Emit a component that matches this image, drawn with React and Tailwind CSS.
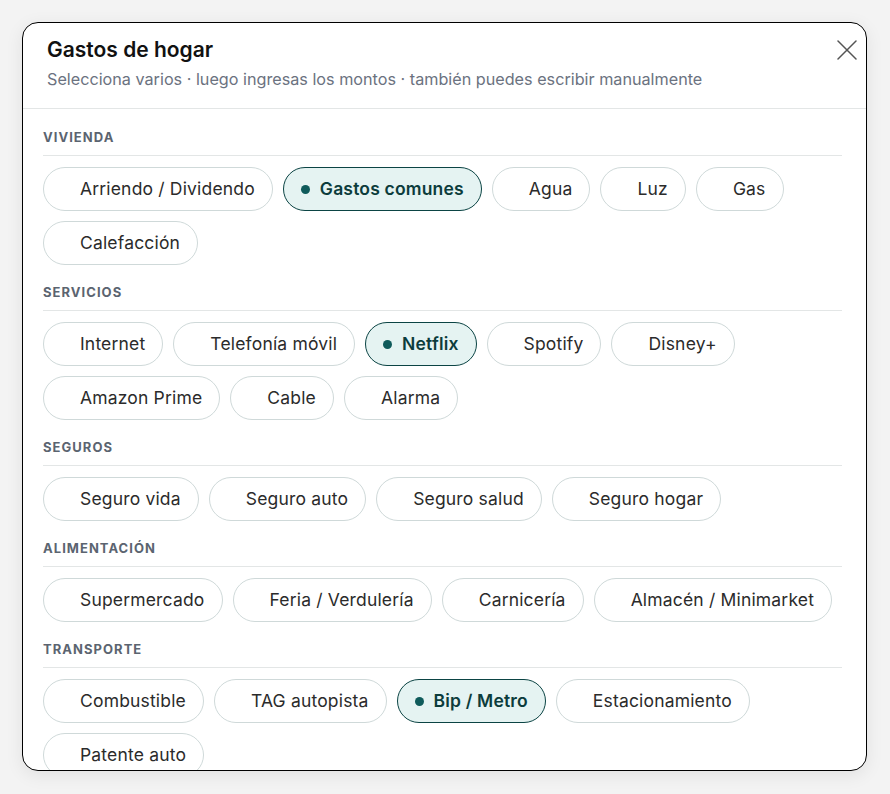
import React, { useState } from 'react';

const SECTIONS = [
  { title: 'Vivienda', items: ['Arriendo / Dividendo', 'Gastos comunes', 'Agua', 'Luz', 'Gas', 'Calefacción'] },
  { title: 'Servicios', items: ['Internet', 'Telefonía móvil', 'Netflix', 'Spotify', 'Disney+', 'Amazon Prime', 'Cable', 'Alarma'] },
  { title: 'Seguros', items: ['Seguro vida', 'Seguro auto', 'Seguro salud', 'Seguro hogar'] },
  { title: 'Alimentación', items: ['Supermercado', 'Feria / Verdulería', 'Carnicería', 'Almacén / Minimarket'] },
  { title: 'Transporte', items: ['Combustible', 'TAG autopista', 'Bip / Metro', 'Estacionamiento', 'Patente auto'] },
];

function Chip({ label, active, onClick }) {
  return (
    <button
      onClick={onClick}
      className={
        active
          ? 'flex h-[44px] items-center gap-[10px] rounded-full border-[1.5px] border-[#0b4444] bg-[#e5f3f2] pl-[17px] pr-[17px] text-[17.5px] font-semibold tracking-[0.01em] text-[#0c3c3c]'
          : 'flex h-[44px] items-center gap-[10px] rounded-full border border-[#cfd9d9] bg-white pl-[17px] pr-[17px] text-[17.5px] tracking-[0.01em] text-[#2b2b2b]'
      }
    >
      <span className={active ? 'h-[9px] w-[9px] rounded-full bg-[#0f5b5b]' : 'h-[9px] w-[9px] rounded-full bg-transparent'} />
      {label}
    </button>
  );
}

export default function App() {
  const [selected, setSelected] = useState(['Gastos comunes', 'Netflix', 'Bip / Metro']);

  const toggle = (name) => {
    setSelected((prev) => (prev.includes(name) ? prev.filter((n) => n !== name) : [...prev, name]));
  };

  return (
    <div className="min-h-[794px] bg-[#f3f3f3] p-[22px] pb-0" style={{ fontFamily: 'Inter, "Noto Sans", sans-serif' }}>
      <div className="flex h-[749px] w-[845px] flex-col overflow-hidden rounded-[16px] border border-black bg-white shadow-[0_4px_18px_rgba(0,0,0,0.08)]">
        <div className="flex items-start justify-between border-b border-[#e3e6e6] pb-[19px] pl-6 pr-[9px] pt-[14px]">
          <div>
            <h1 className="text-[21px] font-semibold leading-[26px] text-[#111]">Gastos de hogar</h1>
            <p className="mt-[6px] text-[16.2px] leading-[20px] text-[#6b7280]">
              Selecciona varios · luego ingresas los montos · también puedes escribir manualmente
            </p>
          </div>
          <button className="mt-[3px] text-[#555]">
            <svg width="20" height="20" viewBox="0 0 20 20" fill="none" stroke="currentColor" strokeWidth="1.5" strokeLinecap="round">
              <path d="M1 1L19 19M19 1L1 19" />
            </svg>
          </button>
        </div>
        <div className="flex-1 overflow-hidden pl-5 pr-6 pt-[20px]">
          {SECTIONS.map((section) => (
            <div key={section.title} className="mb-[19px]">
              <div className="border-b border-[#e3e6e6] pb-[10px] text-[13px] font-bold uppercase leading-[16px] tracking-[0.08em] text-[#5b6470]">
                {section.title}
              </div>
              <div className="mt-[11px] flex flex-wrap gap-[10px]">
                {section.items.map((item) => (
                  <Chip key={item} label={item} active={selected.includes(item)} onClick={() => toggle(item)} />
                ))}
              </div>
            </div>
          ))}
        </div>
      </div>
    </div>
  );
}
